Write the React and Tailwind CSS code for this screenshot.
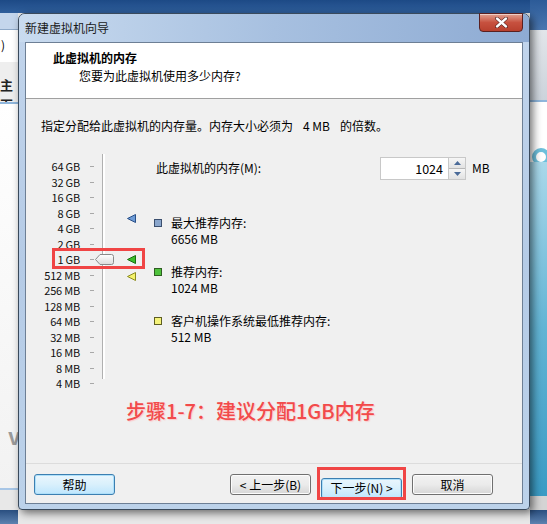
import React from "react";

const font = { fontFamily: '"Noto Sans CJK SC", "Liberation Sans", sans-serif' };

// 滑块刻度
const scale = [
  "64 GB", "32 GB", "16 GB", "8 GB", "4 GB", "2 GB", "1 GB",
  "512 MB", "256 MB", "128 MB", "64 MB", "32 MB", "16 MB", "8 MB", "4 MB",
];

function Tri({ color, dark }) {
  return (
    <svg width="9" height="9" viewBox="0 0 9 9">
      <polygon points="8.5,0.5 8.5,8.5 0.5,4.5" fill={color} stroke={dark} strokeWidth="1" />
    </svg>
  );
}

function Btn({ children, primary }) {
  return (
    <button
      className={
        primary
          ? "w-[81px] h-[21px] rounded-[3px] border border-[#3c7fb1] bg-gradient-to-b from-[#eaf6fd] via-[#d9f0fc] to-[#bee6fd] text-[12px] text-black shadow-[inset_0_0_0_1px_#aee0fa]"
          : "w-[81px] h-[21px] rounded-[3px] border border-[#707070] bg-gradient-to-b from-[#f2f2f2] via-[#ebebeb] to-[#d6d6d6] text-[12px] text-black shadow-[inset_0_0_0_1px_#fcfcfc]"
      }
    >
      {children}
    </button>
  );
}

export default function App() {
  return (
    <div className="relative w-[547px] h-[524px] overflow-hidden bg-white" style={font}>
      {/* 背景桌面 */}
      <div className="flex h-full">
        <div className="w-[18px] flex flex-col">
          <div className="h-[13px] bg-gradient-to-b from-[#1d4a86] to-[#2f5e9b]" />
          <div className="h-[17px] bg-[#c4d6ec] border-b border-[#8ea9c8]" />
          <div className="h-[32px] bg-white text-[12px] pt-[6px] pl-[1px]">)</div>
          <div className="h-[40px] bg-[#eeeeee] text-[13px] font-bold pt-[13px] text-[#222]">主页</div>
          <div className="h-[2px] bg-[#8fb6dc]" />
          <div className="flex-1 bg-gradient-to-b from-white to-[#f2f2f2] text-[22px] font-bold text-[#9a9a9a] pt-[320px] pl-[8px] leading-none">
            vi
          </div>
          <div className="h-[2px] bg-[#a8c6e6]" />
          <div className="h-[20px] bg-[#e8e8e8]" />
          <div className="h-[14px] bg-gradient-to-b from-[#2a4f80] to-[#5d82b0]" />
        </div>
        <div className="flex-1 flex flex-col">
          <div className="h-[13px] bg-gradient-to-b from-[#1d4a86] to-[#2f5e9b]" />
          <div className="flex-1 bg-[#e8e8e8]" />
        </div>
        <div className="w-[17px] flex flex-col">
          <div className="h-[30px] bg-gradient-to-b from-[#2c5b98] to-[#4a77b0]" />
          <div className="h-[70px] bg-gradient-to-b from-[#e2e6ea] to-[#ccd3db]" />
          <div className="h-[2px] bg-[#8fb6dc]" />
          <div className="h-[60px] bg-white pl-[2px] pt-[46px]">
            <div className="w-[18px] h-[18px] rounded-full border-[4px] border-[#6ec0dc]" />
          </div>
          <div className="flex-1 bg-gradient-to-b from-[#a9d8ea] via-[#62b4d4] to-[#3a9bc4]" />
          <div className="h-[14px] bg-[#d4d4d4]" />
          <div className="h-[14px] bg-gradient-to-b from-[#2a4f80] to-[#5d82b0]" />
        </div>
      </div>

      {/* 对话框窗口 */}
      <div className="absolute left-[18px] top-[13px] w-[512px] h-[497px] rounded-t-[7px] rounded-b-[4px] border border-[#3a4a5c] bg-gradient-to-b from-[#c2d5ec] via-[#b5cbe6] to-[#bcd2ea] shadow-[3px_3px_8px_rgba(0,0,0,0.55)] flex flex-col">
        {/* 标题栏 */}
        <div className="h-[28px] flex items-start bg-gradient-to-r from-[#c9dbef] via-[#a7c0e0] to-[#8eabd3] rounded-t-[6px]">
          <div className="pl-[6px] pt-[8px] text-[12px] text-[#1a1a1a] leading-none">新建虚拟机向导</div>
          <div className="ml-auto mr-[6px] w-[44px] h-[19px] -mt-px rounded-b-[4px] border border-[#5a2020] bg-gradient-to-b from-[#e0a090] via-[#c7513f] to-[#b8402e] flex items-center justify-center shadow-[inset_0_1px_0_rgba(255,255,255,0.5)]">
            <svg width="13" height="11" viewBox="0 0 13 11">
              <path d="M2 1.5 L11 9.5 M11 1.5 L2 9.5" stroke="#3a1010" strokeWidth="3.6" strokeLinecap="round" />
              <path d="M2 1.5 L11 9.5 M11 1.5 L2 9.5" stroke="#ffffff" strokeWidth="2.4" strokeLinecap="round" />
            </svg>
          </div>
        </div>

        {/* 客户区 */}
        <div className="mx-[6px] mb-[5px] flex-1 flex flex-col border border-[#6d7f95] bg-[#f0f0f0]">
          {/* 头部 */}
          <div className="h-[56px] bg-white border-b border-[#a0a0a0] pt-[6px] text-[12px] leading-[18px] text-black">
            <div className="pl-[27px] font-bold">此虚拟机的内存</div>
            <div className="pl-[53px]">您要为此虚拟机使用多少内存?</div>
          </div>

          {/* 内容 */}
          <div className="relative flex-1 text-[12px] text-black">
            <div className="pl-[15px] pt-[18px] leading-[18px]">
              指定分配给此虚拟机的内存量。内存大小必须为<span className="mx-[10px]">4 MB</span>的倍数。
            </div>

            <div className="flex mt-[25px]">
              {/* 滑块 */}
              <div className="relative flex pl-[9px] -mt-[2px]">
                <div className="flex flex-col w-[45px] items-end pt-[1px]">
                  {scale.map((s) => (
                    <div key={s} className="h-[15.5px] leading-[15.5px] text-[11px] tracking-[-0.2px] text-[#111] whitespace-nowrap">
                      {s}
                    </div>
                  ))}
                </div>
                <div className="flex flex-col w-[22px] items-center pl-[1px] pt-[1px]">
                  {scale.map((s) => (
                    <div key={s} className="h-[15.5px] flex items-center">
                      <div className="w-[4px] h-px bg-[#a8a8a8]" />
                    </div>
                  ))}
                </div>
                <div className="w-[3px] h-[225px] -mt-[4px] border-l border-[#b0b0b0] bg-white" />
                {/* 滑块手柄 */}
                <div className="absolute left-[69px] top-[96px]">
                  <svg width="19" height="11" viewBox="0 0 19 11">
                    <defs>
                      <linearGradient id="th" x1="0" y1="0" x2="0" y2="1">
                        <stop offset="0" stopColor="#ffffff" />
                        <stop offset="1" stopColor="#dcdcdc" />
                      </linearGradient>
                    </defs>
                    <path d="M0.5 5.5 L5 0.5 H16.5 Q18.5 0.5 18.5 2.5 V8.5 Q18.5 10.5 16.5 10.5 H5 Z" fill="url(#th)" stroke="#8a8a8a" />
                  </svg>
                </div>
                <div className="absolute left-[101px] top-[56px]"><Tri color="#6d9bd6" dark="#284f87" /></div>
                <div className="absolute left-[101px] top-[97px]"><Tri color="#3bbd2c" dark="#1a6e12" /></div>
                <div className="absolute left-[101px] top-[114px]"><Tri color="#f4f26a" dark="#8a8a20" /></div>
                {/* 红框 */}
                <div className="absolute left-[26px] top-[90px] w-[93px] h-[21px] border-[3px] border-[#f04545]" />
              </div>

              {/* 右侧 */}
              <div className="ml-[49px] flex-1 pr-[30px]">
                <div className="flex items-center h-[22px] -mt-[3px]">
                  <span className="ml-[2px]">此虚拟机的内存(M):</span>
                  <div className="ml-auto flex h-[23px] w-[86px] border border-[#c8c8c8] bg-white">
                    <div className="flex-1 text-right pr-[5px] leading-[21px] text-[12.5px]">1024</div>
                    <div className="w-[17px] flex flex-col border-l border-[#c8c8c8]">
                      <div className="flex-1 flex items-center justify-center bg-gradient-to-b from-[#f6f6f6] to-[#e2e2e2] border-b border-[#b8b8b8]">
                        <svg width="7" height="4" viewBox="0 0 7 4"><polygon points="0,4 7,4 3.5,0" fill="#4a6a98" /></svg>
                      </div>
                      <div className="flex-1 flex items-center justify-center bg-gradient-to-b from-[#f6f6f6] to-[#e2e2e2]">
                        <svg width="7" height="4" viewBox="0 0 7 4"><polygon points="0,0 7,0 3.5,4" fill="#4a6a98" /></svg>
                      </div>
                    </div>
                  </div>
                  <span className="ml-[6px] w-[20px]">MB</span>
                </div>

                <div className="mt-[36px] flex flex-col gap-[17px] leading-[16px]">
                  <div className="flex">
                    <div className="w-[8px] h-[8px] mt-[4px] border border-[#3b4f6e] bg-[#8aa6cc]" />
                    <div className="ml-[9px]">
                      <div>最大推荐内存:</div>
                      <div>6656 MB</div>
                    </div>
                  </div>
                  <div className="flex">
                    <div className="w-[8px] h-[8px] mt-[4px] border border-[#2f5e22] bg-[#4fc23c]" />
                    <div className="ml-[9px]">
                      <div>推荐内存:</div>
                      <div>1024 MB</div>
                    </div>
                  </div>
                  <div className="flex">
                    <div className="w-[8px] h-[8px] mt-[4px] border border-[#5e5e22] bg-[#f5f37a]" />
                    <div className="ml-[9px]">
                      <div>客户机操作系统最低推荐内存:</div>
                      <div>512 MB</div>
                    </div>
                  </div>
                </div>
              </div>
            </div>

            {/* 红色注释 */}
            <div className="pl-[100px] mt-[6px] text-[20px] font-medium leading-[26px] text-[#f24a4a] [text-shadow:1px_1px_1px_rgba(255,190,190,0.8)]">
              步骤1-7：建议分配1GB内存
            </div>
          </div>

          {/* 底部按钮 */}
          <div className="h-[40px] border-t border-[#dcdcdc] flex items-start pt-[10px] px-[8px]">
            <Btn primary>帮助</Btn>
            <div className="ml-auto flex gap-[10px] mr-[21px]">
              <Btn>&lt; 上一步(B)</Btn>
              <div className="relative">
                <Btn primary>下一步(N) &gt;</Btn>
                <div className="absolute -left-[4px] -top-[7px] w-[89px] h-[33px] border-[3px] border-[#f04545]" />
              </div>
              <Btn>取消</Btn>
            </div>
          </div>
        </div>
      </div>
    </div>
  );
}
